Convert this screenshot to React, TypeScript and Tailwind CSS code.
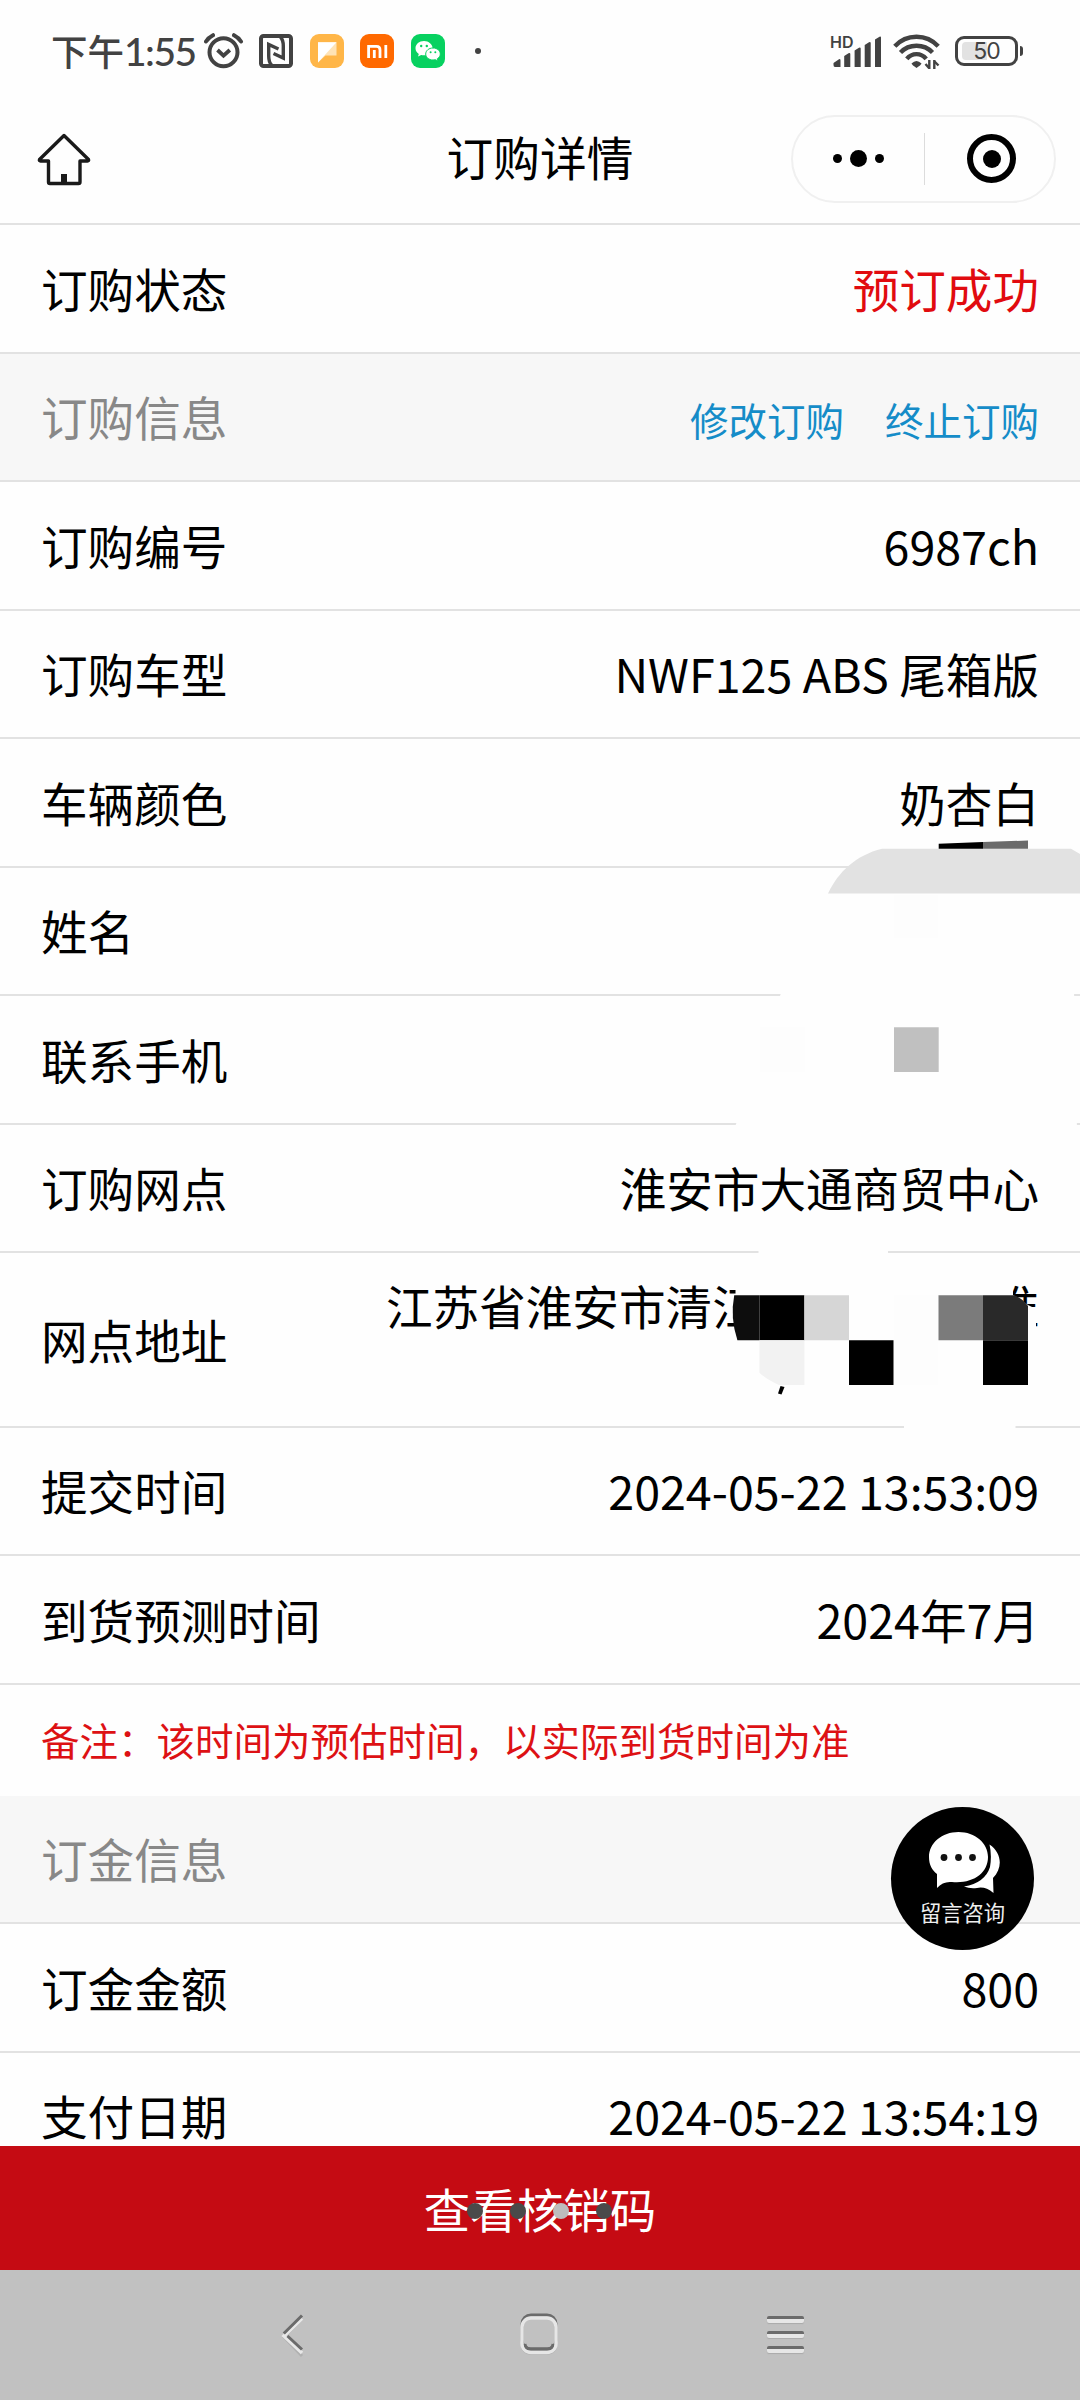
import type { ReactNode } from 'react';

function AlarmIcon() {
  return (
    <svg className="block h-9 w-10" viewBox="0 0 40 36" fill="none" stroke="#424242" strokeLinecap="round">
      <circle cx="19.5" cy="19.3" r="14" strokeWidth="4" />
      <path d="M13.500 17l6 5.700L25.800 17" strokeWidth="3.800" strokeLinecap="butt" />
      <path d="M2 8.500Q4.500 4.500 9 2.200M37 8.500Q34.500 4.500 30 2.200" strokeWidth="4" />
    </svg>
  );
}

function NfcIcon() {
  return (
    <svg className="block size-[34px]" viewBox="0 0 34 34" fill="none" stroke="#424242">
      <rect x="2" y="2" width="30" height="30" rx="2.500" strokeWidth="4" />
      <path d="M12.500 31Q9.700 28 9.700 22V10.500L19.500 15M21.500 3Q24.300 6 24.300 12V24L14.500 19.500" strokeWidth="3.400" />
    </svg>
  );
}

function NoteAppIcon() {
  return (
    <svg className="block size-[34px]" viewBox="0 0 34 34">
      <rect width="34" height="34" rx="9" fill="#ffb648" />
      <path d="M8 28.500V8.200H26.500V21.500H15.500Z" fill="#ffe3b5" />
      <path d="M8 28.500V8.200H26.500Z" fill="#fff" />
    </svg>
  );
}

function MiIcon() {
  return (
    <svg className="block size-[34px]" viewBox="0 0 34 34" fill="none" stroke="#fff" strokeWidth="2.800">
      <rect width="34" height="34" rx="9" fill="#ff6900" stroke="none" />
      <path d="M8.600 24V12.400H16.500Q20 12.400 20 16V24M14.300 16V24M25.800 11V24" />
    </svg>
  );
}

function WeChatIcon() {
  return (
    <svg className="block size-[34px]" viewBox="0 0 34 34">
      <rect width="34" height="34" rx="9" fill="#07d160" />
      <path d="M13 7C8.200 7 4.500 10.200 4.500 14.200c0 2.400 1.300 4.400 3.300 5.700L7 22.500l3.200-1.600c.9.300 1.800.4 2.800.4 4.700 0 8.600-3.200 8.600-7.100S17.700 7 13 7z" fill="#fff" />
      <path d="M22 14c-4.200 0-7.300 2.700-7.300 6s3.100 6 7.300 6c.9 0 1.700-.1 2.400-.3l2.700 1.400-.7-2.400c1.700-1.100 2.900-2.800 2.900-4.700 0-3.300-3.100-6-7.300-6z" fill="#fff" stroke="#07d160" strokeWidth="1" />
      <g fill="#07d160">
        <circle cx="10.200" cy="12" r="1.200" />
        <circle cx="15.800" cy="12" r="1.200" />
        <circle cx="19.600" cy="18.300" r="1" />
        <circle cx="24.300" cy="18.300" r="1" />
      </g>
    </svg>
  );
}

function SignalIcon() {
  return (
    <svg className="block h-[34px] w-[50px]" viewBox="0 0 50 34" fill="#424242">
      <path d="M2.500 31V29L8 25.200Q9.500 24.700 9.500 26.500V33H4Q2.500 33 2.500 31ZM13.200 33V22L17.500 19.200Q19.300 18.500 19.300 20V33ZM23.600 33V16.500L28 13.700Q29.700 13.200 29.700 14.500V33ZM33.700 33V11L38 8.200Q39.700 7.700 39.700 9V33ZM44 33V5.500L48.500 2.700Q50 2.200 50 3.500V33Z" />
    </svg>
  );
}

function WifiIcon() {
  return (
    <svg className="block h-9 w-12" viewBox="0 0 48 36" fill="none" stroke="#424242" strokeWidth="4.400">
      <path d="M1.800 12.200C13.500 -.5 33.500 -.5 45.200 12.200M7.500 18.500C16 9.500 31 9.500 39.500 18.500M13.800 24.800C19 18.500 28 18.500 33.200 24.800" />
      <path d="M18.500 29.500Q23.500 24.500 28.500 29.500Q28 31 23.500 34Q19 31 18.500 29.500Z" fill="#424242" stroke="none" />
      <path d="M36.300 26v9M41.300 26v9" strokeWidth="2.400" />
      <path d="M32.500 30l3.500 4M41.500 27.500l4 4" strokeWidth="2.400" />
    </svg>
  );
}

function StatusBar() {
  return (
    <div className="flex h-[102px] items-start text-[#424242]">
      <div className="mt-[25px] ml-[51px] flex h-[52px] w-[153px] items-center whitespace-nowrap">
        <span className="text-[36.500px] leading-[52px] font-medium">下午</span>
        <span className="font-[Lato,sans-serif] text-[39px] leading-[52px] font-medium tracking-[-1.500px]">1:55</span>
      </div>
      <div className="mt-[33px]"><AlarmIcon /></div>
      <div className="mt-[34px] ml-[15px] flex gap-[16.500px]">
        <NfcIcon />
        <NoteAppIcon />
        <MiIcon />
        <WeChatIcon />
      </div>
      <div className="mt-[48px] ml-[30px] size-1.5 rounded-full bg-[#424242]" />
      <div className="relative mt-[34px] ml-auto">
        <SignalIcon />
        <span className="absolute top-0 left-[-1px] font-[Inter,sans-serif] text-[16px] leading-[16px] font-semibold">HD</span>
      </div>
      <div className="mt-[34px] ml-3"><WifiIcon /></div>
      <div className="mt-[36px] mr-[57px] ml-[14px] flex items-center">
        <div className="relative flex h-[30px] w-[63px] items-center justify-center rounded-[9px] border-[3px] border-[#424242]">
          <span className="absolute top-[3px] left-[4px] h-[18px] w-[25px] rounded-l-[4px] bg-[#e2e2e2]" />
          <span className="relative font-[Inter,sans-serif] text-[23px] leading-none tracking-[-1px]">50</span>
        </div>
        <div className="ml-[2px] h-[10px] w-[3px] rounded-r bg-[#424242]" />
      </div>
    </div>
  );
}

function NavBar() {
  return (
    <header className="flex h-[123px] items-center justify-between border-b-2 border-[#e2e2e2] pr-6 pb-2 pl-[37px]">
      <div className="w-[252px]">
        <svg className="block h-[54px] w-[54px]" viewBox="0 0 54 54" fill="none" stroke="#1a1a1a" strokeWidth="3.400" strokeLinejoin="round">
          <path d="M27 3.500L51.500 27.500Q52 29 50.500 29H43V50Q43 51.500 41.500 51.500H13Q11.500 51.500 11.500 50V29H3.500Q2 29 2.500 27.500Z" />
          <path d="M24 42h6v9h-6z" fill="#1a1a1a" stroke="none" />
        </svg>
      </div>
      <h1 className="pb-[5px] text-[46.700px] leading-[60px]">订购详情</h1>
      <div className="flex h-[88px] w-[265px] items-center rounded-full border-2 border-[#f0f0f0]">
        <div className="flex w-[131px] items-center justify-center gap-2">
          <span className="size-[9px] rounded-full bg-black" />
          <span className="size-[17px] rounded-full bg-black" />
          <span className="size-[9px] rounded-full bg-black" />
        </div>
        <div className="h-[52px] w-px bg-[#dcdcdc]" />
        <div className="flex flex-1 justify-center pl-[5px]">
          <div className="flex size-[49px] items-center justify-center rounded-full border-[6px] border-black">
            <span className="size-[18px] rounded-full bg-black" />
          </div>
        </div>
      </div>
    </header>
  );
}

type RowProps = { label: string; height: string; children?: ReactNode };

function Row({ label, height, children }: RowProps) {
  return (
    <div className={`flex shrink-0 items-center justify-between border-b-2 border-[#e2e2e2] px-[41px] pb-[2px] ${height}`}>
      <span>{label}</span>
      {children && <span className="whitespace-nowrap">{children}</span>}
    </div>
  );
}

function Mosaic() {
  return (
    <svg className="absolute top-[838px] left-[720px] h-[600px] w-[360px]" viewBox="720 838 360 600">
      <g fill="#fefefe">
        <path d="M782 990H1074L1077 1130H734Z" />
        <path d="M758.500 1247H888V1257H758.500ZM904 1422H1015.500V1432H904Z" />
        <path d="M735.500 1275H1013V1295L1028 1305L1036 1309V1400H735.500Z" />
      </g>
      <path d="M828 893.500C838 872 856 855 882 848.700H1071L1080 854V893.500Z" fill="#e2e2e2" />
      <path d="M938.700 843.700L983 842V848.700H938.700Z" fill="#000" />
      <path d="M983 842L1028 840.500V848.700H983Z" fill="#6b6b6b" />
      <path d="M894 895H938.500V938H894ZM760 1027H805V1072H760ZM893.500 1295H938.500V1385H893.500Z" fill="#fdfdfd" />
      <path d="M894 1027.300H938.700V1072H894Z" fill="#c0c0c0" />
      <path d="M734.200 1295.300H759.400V1340.300H737.400Q730 1318 734.200 1295.300Z" fill="#0d0d0d" />
      <path d="M759.400 1295.300H804.400V1340.300H759.400ZM849 1340.300H893.500V1385H849ZM983 1340.300H1028V1385H983Z" fill="#000" />
      <path d="M804.400 1295.300H849V1340.300H804.400Z" fill="#d6d6d6" />
      <path d="M938.500 1295.300H983V1340.300H938.500Z" fill="#7b7b7b" />
      <path d="M983 1295.300H1014Q1022 1298 1028 1306V1340.300H983Z" fill="#292929" />
      <path d="M759.400 1340.300H804.400V1385H779Q766 1379 759.400 1372.700Z" fill="#f2f2f2" />
      <path d="M780.500 1386L784.500 1387L781.500 1394.500L778 1393.500Z" fill="#000" />
    </svg>
  );
}

function ChatButton() {
  return (
    <div className="absolute top-[1807px] left-[891px] flex size-[143px] flex-col items-center rounded-full bg-black">
      <svg className="mt-[24px] block h-[64px] w-[76px]" viewBox="0 0 76 64">
        <path d="M64.500 13.500C77 22 78 37 68 47L68.500 62Q60 55 52 57Q45 58 39 55.500Q60 52 65 36Q67 24 64.500 13.500Z" fill="#fff" />
        <path d="M33.500 1C17 1 4 12 4 26C4 34 7 39 12 43V57Q18 50 27 51C48 53 63 42 63 26C63 12 50 1 33.500 1Z" fill="#fff" />
        <g fill="#111">
          <circle cx="19" cy="26.500" r="3.400" />
          <circle cx="33.500" cy="26.500" r="3.400" />
          <circle cx="47.500" cy="26.500" r="3.400" />
        </g>
      </svg>
      <span className="mt-[1px] text-[21.300px] leading-[32px] text-[#eee]">留言咨询</span>
    </div>
  );
}

function SystemNav() {
  return (
    <div className="flex h-[130px] items-start justify-between bg-[#c1c1c1] px-[276px] pt-[40px]">
      <svg className="block h-12 w-8" viewBox="0 0 32 48" fill="none" strokeWidth="3">
        <path d="M26 9L8 27L26 46" stroke="#b0b0b0" />
        <path d="M26 8.500L8 26L26 43" stroke="#e8e8e8" strokeWidth="3.500" />
        <path d="M26 5.500L7.800 23.500M11.500 26L26 39.500" stroke="#6b6b6b" />
      </svg>
      <svg className="ml-[3px] block h-12 w-12" viewBox="0 0 48 48" fill="none">
        <rect x="7" y="8" width="34" height="35.500" rx="9" stroke="#b2b2b2" strokeWidth="3" />
        <rect x="7" y="5" width="34" height="34" rx="9" stroke="#6b6b6b" strokeWidth="3" />
        <rect x="7" y="8" width="34" height="34.500" rx="9" stroke="#e6e6e6" strokeWidth="3.500" />
        <path d="M10 34Q10.500 38.800 15 38.800H33Q37.500 38.800 38 34" stroke="#6b6b6b" strokeWidth="2.800" />
      </svg>
      <div className="flex w-[37px] flex-col gap-[8px] pt-[6px]">
        {[0, 1, 2].map((i) => (
          <div key={i} className="h-[7px] rounded-[2px] border-t-[3px] border-[#6b6b6b] bg-[#e6e6e6] shadow-[0_1px_1px_#aaaaaa]" />
        ))}
      </div>
    </div>
  );
}

export default function App() {
  return (
    <div className="relative flex h-[2400px] w-[1080px] flex-col overflow-hidden bg-[#fefefe] font-['Noto_Sans_CJK_SC',sans-serif] text-black">
      <StatusBar />
      <NavBar />
      <main className="flex h-[1921px] flex-col text-[46.600px] leading-[64px]">
        <Row label="订购状态" height="h-[129px]"><span className="text-[#e10b0f]">预订成功</span></Row>
        <div className="flex h-[128px] shrink-0 items-center justify-between border-b-2 border-[#e2e2e2] bg-[#f7f7f7] px-[41px] pb-[2px] text-[#888]">
          <span>订购信息</span>
          <div className="flex gap-[41px] pt-[5px] text-[38.500px] text-[#158cc8]">
            <span>修改订购</span>
            <span>终止订购</span>
          </div>
        </div>
        <Row label="订购编号" height="h-[129px]">6987ch</Row>
        <Row label="订购车型" height="h-[128px]">NWF125 ABS 尾箱版</Row>
        <Row label="车辆颜色" height="h-[129px]">奶杏白</Row>
        <Row label="姓名" height="h-[128px]" />
        <Row label="联系手机" height="h-[129px]" />
        <Row label="订购网点" height="h-[128px]">淮安市大通商贸中心</Row>
        <Row label="网点地址" height="h-[175px]">
          <span className="flex h-[132px] w-[653px] items-start justify-between">
            <span>江苏省淮安市清江</span>
            <span>淮</span>
          </span>
        </Row>
        <Row label="提交时间" height="h-[128px]">2024-05-22 13:53:09</Row>
        <Row label="到货预测时间" height="h-[129px]">2024年7月</Row>
        <div className="flex h-[111px] shrink-0 items-center px-[41px] pb-[3px] text-[38.500px] text-[#dd1114]">
          备注：该时间为预估时间，以实际到货时间为准
        </div>
        <div className="flex h-[128px] shrink-0 items-center border-b-2 border-[#e2e2e2] bg-[#f7f7f7] px-[41px] pb-[2px] text-[#888]">
          订金信息
        </div>
        <Row label="订金金额" height="h-[129px]">800</Row>
        <div className="flex h-[92px] shrink-0 items-start justify-between px-[41px] pt-[38px] leading-[48px]">
          <span>支付日期</span>
          <span>2024-05-22 13:54:19</span>
        </div>
      </main>
      <button className="relative flex h-[124px] w-full items-center justify-center bg-[#c50b13] text-[46.500px] leading-[64px] text-white">
        查看核销码
        <span className="absolute top-[57px] left-[467px] flex gap-[27px]">
          <span className="size-4 rounded-full bg-[#4a4a4a]" />
          <span className="size-4 rounded-full bg-[#4a4a4a]" />
          <span className="size-4 rounded-full bg-[#bdbdbd]" />
          <span className="size-4 rounded-full bg-[#4a4a4a]" />
        </span>
      </button>
      <SystemNav />
      <Mosaic />
      <ChatButton />
    </div>
  );
}
